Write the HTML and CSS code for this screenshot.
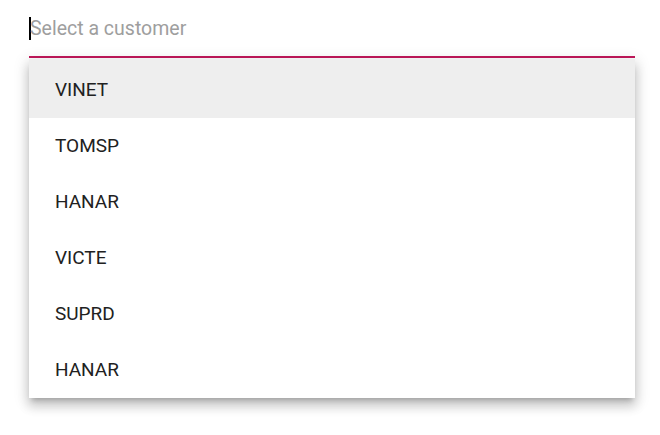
FILE: index.html
```html
<!DOCTYPE html>
<html lang="en">
<head>
    <meta charset="UTF-8">
    <meta name="viewport" content="width=device-width, initial-scale=1.0">
    <title>Customer autocomplete</title>
    <link rel="stylesheet" href="styles.css">
</head>
<body>
    <!-- autocomplete field -->
    <div class="autocomplete">
        <div class="field">
            <span class="caret"></span>
            <span class="placeholder">Select a customer</span>
        </div>

        <!-- suggestion panel -->
        <ul class="panel">
            <li class="option active">VINET</li>
            <li class="option">TOMSP</li>
            <li class="option">HANAR</li>
            <li class="option">VICTE</li>
            <li class="option">SUPRD</li>
            <li class="option">HANAR</li>
        </ul>
    </div>
</body>
</html>
```

FILE: styles.css
```css
html, body {
    height: 100%;
}
body {
    font-family: Roboto, "Noto Sans", Arial, sans-serif;
    margin: 0;
    padding: 0;
    background-color: #fff;
    min-height: 435px;
}
.autocomplete {
    width: 606px;
    margin-left: 29px;
    padding-top: 17px;
}
.field {
    display: flex;
    align-items: center;
    height: 23px;
    padding-bottom: 16px;
    border-bottom: 2px solid #c2185b;
}
.field .caret {
    width: 2px;
    height: 23px;
    background-color: #000;
}
.field .placeholder {
    font-size: 19.5px;
    color: #9e9e9e;
    margin-left: -1px;
    line-height: 23px;
}
.panel {
    list-style: none;
    margin: 1px 0 0 0;
    padding: 0;
    background-color: #fff;
    box-shadow: 0 5px 5px -3px rgba(0, 0, 0, 0.2),
                0 8px 10px 1px rgba(0, 0, 0, 0.14),
                0 3px 14px 2px rgba(0, 0, 0, 0.12);
}
.option {
    height: 56px;
    line-height: 56px;
    padding: 0 26px;
    font-size: 19px;
    color: #212121;
}
.option:first-child {
    padding-top: 3px;
}
.option.active {
    background-color: #eee;
}
```
